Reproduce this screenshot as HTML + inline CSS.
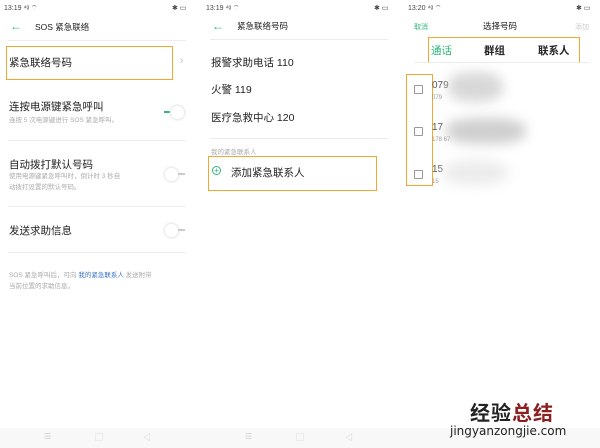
<html><head><style>
body{margin:0;width:600px;height:448px;background:#fff;position:relative;overflow:hidden;font-family:"Liberation Sans","Noto Sans CJK SC",sans-serif;color:#222}
.a{position:absolute;white-space:nowrap}
.s{font-size:7px;color:#444}
.hr{position:absolute;height:1px;background:#ececec}
.box{position:absolute;border:1.5px solid #f0a830}
.tg{position:absolute;width:13px;height:13px;border-radius:50%;border:1px solid #eee;background:#fff;box-shadow:0 0 2px #ddd}
.cb{position:absolute;width:7px;height:7px;border:1px solid #999;border-radius:1px}
.nav{position:absolute;top:428px;height:20px;width:600px;background:#f8f8f8}
</style></head><body>
<!-- panel 1 -->
<div class="a s" style="left:4px;top:4px">13:19 ⁴ᵍ ⌔</div>
<div class="a s" style="left:172px;top:4px">✱ ▭</div>
<div class="a" style="left:10px;top:19px;color:#2fb67a;font-size:12px">←</div>
<div class="a" style="left:35px;top:21px;font-size:8.5px">SOS 紧急联络</div>
<div class="hr" style="left:8px;width:178px;top:40px"></div>
<div class="box" style="left:6px;top:46px;width:165px;height:32px"></div>
<div class="a" style="left:9px;top:55px;font-size:10.5px">紧急联络号码</div>
<div class="a" style="left:180px;top:55px;color:#bbb;font-size:10px">›</div>
<div class="a" style="left:9px;top:99px;font-size:10.5px">连按电源键紧急呼叫</div>
<div class="a" style="left:9px;top:114px;font-size:6.5px;color:#aaa">连按 5 次电源键进行 SOS 紧急呼叫。</div>
<div class="a" style="left:164px;top:111px;width:8px;height:2px;background:#2fb67a"></div>
<div class="tg" style="left:170px;top:105px"></div>
<div class="hr" style="left:8px;width:178px;top:140px"></div>
<div class="a" style="left:9px;top:157px;font-size:10.5px">自动拨打默认号码</div>
<div class="a" style="left:9px;top:171px;font-size:6.5px;color:#aaa;line-height:11px">使用电源键紧急呼叫时，倒计时 3 秒自<br>动拨打设置的默认号码。</div>
<div class="tg" style="left:164px;top:167px"></div>
<div class="a" style="left:178px;top:173px;width:7px;height:2px;background:#ccc"></div>
<div class="hr" style="left:8px;width:178px;top:206px"></div>
<div class="a" style="left:9px;top:223px;font-size:10.5px">发送求助信息</div>
<div class="tg" style="left:164px;top:223px"></div>
<div class="a" style="left:178px;top:229px;width:7px;height:2px;background:#ccc"></div>
<div class="hr" style="left:8px;width:178px;top:252px"></div>
<div class="a" style="left:9px;top:270px;font-size:6.5px;color:#aaa;line-height:11px">SOS 紧急呼叫后，可向 <span style="color:#3a76c4">我的紧急联系人</span> 发送附带<br>当前位置的求助信息。</div>
<!-- panel 2 -->
<div class="a s" style="left:206px;top:4px">13:19 ⁴ᵍ ⌔</div>
<div class="a s" style="left:374px;top:4px">✱ ▭</div>
<div class="a" style="left:212px;top:19px;color:#2fb67a;font-size:12px">←</div>
<div class="a" style="left:237px;top:20px;font-size:8.5px">紧急联络号码</div>
<div class="hr" style="left:210px;width:178px;top:39px"></div>
<div class="a" style="left:211px;top:55px;font-size:10.5px">报警求助电话 110</div>
<div class="a" style="left:211px;top:82px;font-size:10.5px">火警 119</div>
<div class="a" style="left:211px;top:110px;font-size:10.5px">医疗急救中心 120</div>
<div class="hr" style="left:210px;width:178px;top:138px"></div>
<div class="a" style="left:211px;top:146px;font-size:6.5px;color:#aaa">我的紧急联系人</div>
<div class="box" style="left:208px;top:156px;width:167px;height:33px"></div>
<div class="a" style="left:212px;top:166px;width:7px;height:7px;border:1px solid #2fb67a;border-radius:50%;color:#2fb67a;font-size:8px;line-height:7px;text-align:center">+</div>
<div class="a" style="left:231px;top:165px;font-size:10.5px">添加紧急联系人</div>
<!-- panel 3 -->
<div class="a s" style="left:408px;top:4px">13:20 ⁴ᵍ ⌔</div>
<div class="a s" style="left:576px;top:4px">✱ ▭</div>
<div class="a" style="left:414px;top:22px;font-size:7px;color:#2fb67a">取消</div>
<div class="a" style="left:483px;top:20px;font-size:8.5px">选择号码</div>
<div class="a" style="left:575px;top:22px;font-size:7px;color:#ccc">添加</div>
<div class="box" style="left:428px;top:37px;width:150px;height:24px"></div>
<div class="a" style="left:431px;top:43px;font-size:10.5px;color:#2fb67a">通话</div>
<div class="a" style="left:484px;top:43px;font-size:10.5px;font-weight:bold">群组</div>
<div class="a" style="left:538px;top:43px;font-size:10.5px;font-weight:bold">联系人</div>
<div class="hr" style="left:414px;width:176px;top:62px"></div>
<div class="box" style="left:406px;top:74px;width:25px;height:110px"></div>
<div class="cb" style="left:414px;top:85px"></div>
<div class="cb" style="left:414px;top:127px"></div>
<div class="cb" style="left:414px;top:170px"></div>
<div class="a" style="left:432px;top:80px;font-size:10px;color:#555">079</div>
<div class="a" style="left:432px;top:95px;font-size:6px;color:#999">079</div>
<div class="a" style="left:432px;top:122px;font-size:10px;color:#555">17</div>
<div class="a" style="left:432px;top:137px;font-size:6px;color:#999">178 67</div>
<div class="a" style="left:432px;top:164px;font-size:10px;color:#555">15</div>
<div class="a" style="left:432px;top:179px;font-size:6px;color:#999">15</div>
<div class="a" style="left:448px;top:72px;width:55px;height:30px;background:#d8d8d8;border-radius:40%;filter:blur(6px)"></div>
<div class="a" style="left:446px;top:118px;width:80px;height:26px;background:#cfcfcf;border-radius:40%;filter:blur(6px)"></div>
<div class="a" style="left:443px;top:160px;width:65px;height:25px;background:#ececec;border-radius:40%;filter:blur(6px)"></div>
<!-- watermark -->
<div class="a" style="left:470px;top:397px;font-size:20px;font-weight:bold;letter-spacing:1px"><span style="color:#222">经验</span><span style="color:#8b2020">总结</span></div>
<div class="nav"></div>
<div class="a" style="left:450px;top:424px;font-size:12px;color:#222;font-family:'DejaVu Sans',sans-serif">jingyanzongjie.com</div>
<div class="a" style="left:44px;top:432px;font-size:8px;color:#ccc">☰</div>
<div class="a" style="left:95px;top:432px;font-size:8px;color:#ccc">▢</div>
<div class="a" style="left:143px;top:432px;font-size:8px;color:#ccc">◁</div>
<div class="a" style="left:245px;top:432px;font-size:8px;color:#ccc">☰</div>
<div class="a" style="left:296px;top:432px;font-size:8px;color:#ccc">▢</div>
<div class="a" style="left:345px;top:432px;font-size:8px;color:#ccc">◁</div>
</body></html>
